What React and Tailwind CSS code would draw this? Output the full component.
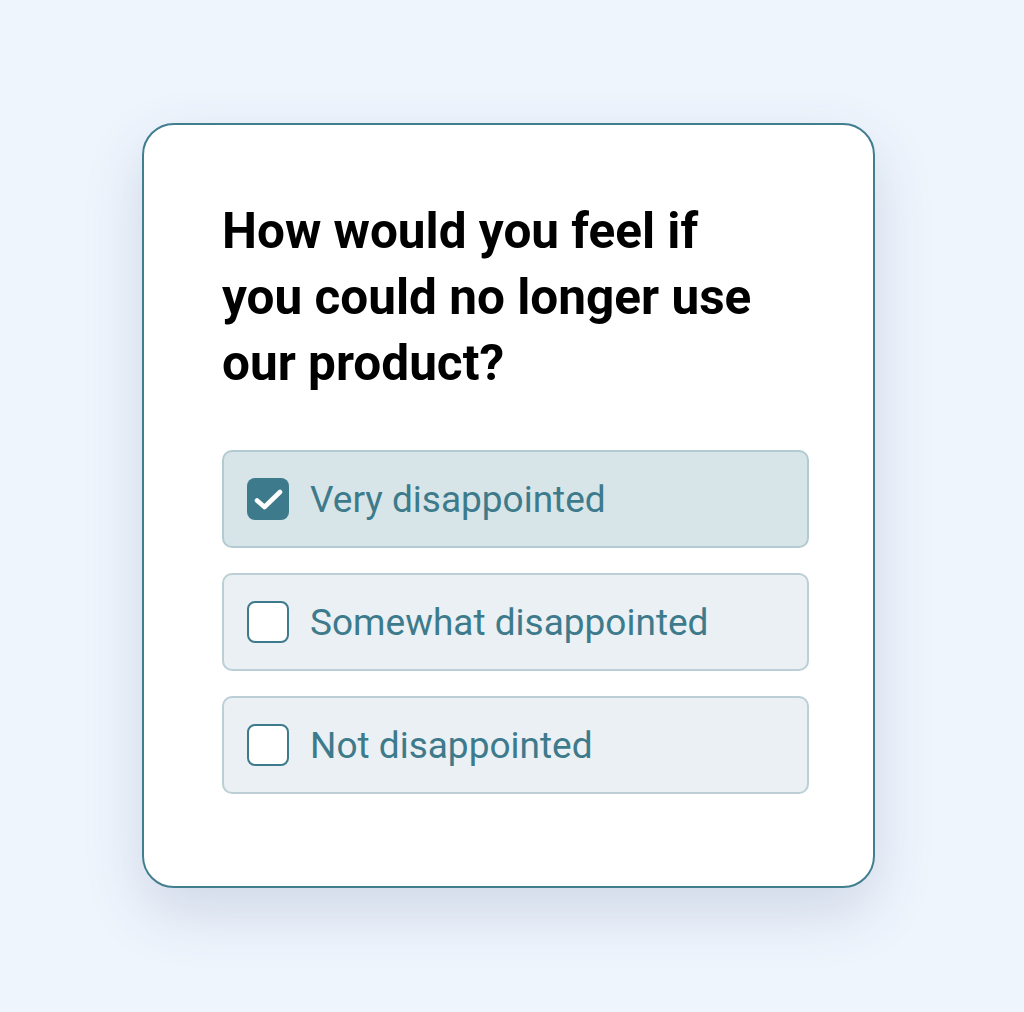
import React from "react";

const options = [
  { label: "Very disappointed", checked: true },
  { label: "Somewhat disappointed", checked: false },
  { label: "Not disappointed", checked: false },
];

function Box({ checked }) {
  if (checked) {
    return (
      <div className="w-[42px] h-[42px] rounded-[8px] bg-[#3d7a8b] shrink-0">
        <svg width="42" height="42" viewBox="0 0 42 42" fill="none">
          <path d="M10 22.5l7.5 6.5L33 14" stroke="#fff" strokeWidth="4.6" strokeLinecap="round" strokeLinejoin="round" />
        </svg>
      </div>
    );
  }
  return <div className="w-[42px] h-[42px] rounded-[8px] bg-white border-2 border-[#3d7a8b] shrink-0" />;
}

export default function App() {
  return (
    <div className="min-h-[1012px] w-full bg-[#eff5fd] flex justify-start pl-[142px] pt-[123px]" style={{ fontFamily: "Roboto, 'Noto Sans', sans-serif" }}>
      <div className="w-[733px] h-[765px] bg-white border-2 border-[#417e8f] rounded-[32px] shadow-[0_24px_60px_rgba(40,70,110,0.16)] pl-[78px] pt-[73px] flex flex-col">
        <h1 className="text-[49.5px] leading-[66px] font-bold text-black max-w-[545px] m-0">
          How would you feel if you could no longer use our product?
        </h1>
        <div className="mt-[54px] flex flex-col gap-[25px] w-[587px]">
          {options.map((o) => (
            <div
              key={o.label}
              className={
                o.checked
                  ? "h-[98px] rounded-[10px] border-2 border-[#b2cbd2] bg-[#d8e5e8] flex items-center pl-[23px] gap-[21px]"
                  : "h-[98px] rounded-[10px] border-2 border-[#bccfd6] bg-[#eaf0f3] flex items-center pl-[23px] gap-[21px]"
              }
            >
              <Box checked={o.checked} />
              <span className="text-[37px] text-[#3d7a8b] leading-none">{o.label}</span>
            </div>
          ))}
        </div>
      </div>
    </div>
  );
}
